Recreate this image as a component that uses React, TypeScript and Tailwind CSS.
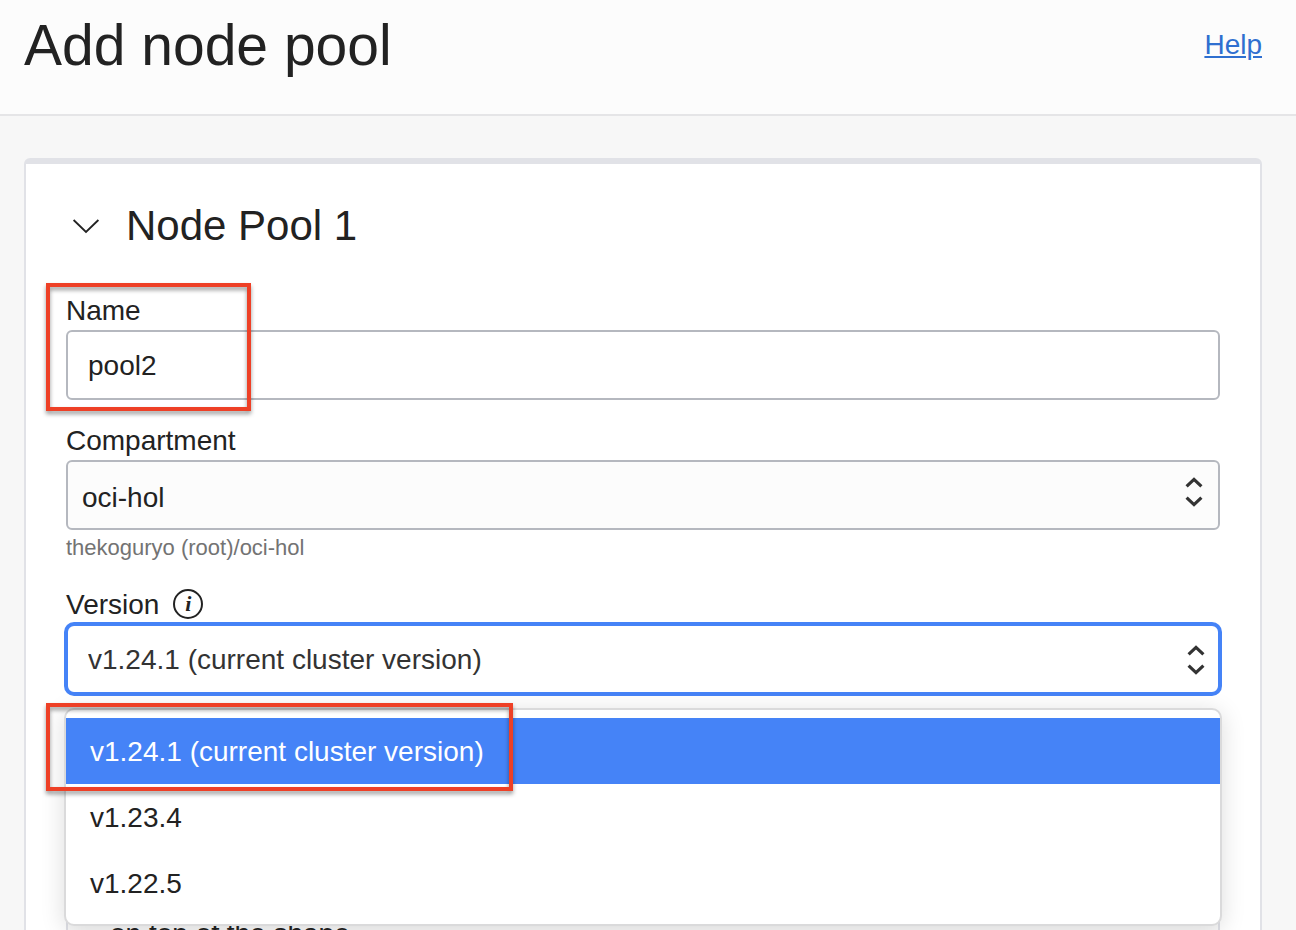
import { useState } from "react";

const versions = [
  { value: "v1.24.1", label: "v1.24.1 (current cluster version)" },
  { value: "v1.23.4", label: "v1.23.4" },
  { value: "v1.22.5", label: "v1.22.5" },
];

const labelClass = "pt-0.5 text-[28px] leading-[38px]";
const fieldClass =
  "h-[70px] w-full rounded-md border-2 border-[#b5b8bf] text-[28px] outline-none";

function ChevronDown() {
  return (
    <svg width="28" height="16" viewBox="0 0 28 16" fill="none" aria-hidden="true">
      <path d="M1.6 2 14 14 26.4 2" stroke="#222" strokeWidth="1.8" />
    </svg>
  );
}

function UpDown() {
  return (
    <svg width="18" height="30" viewBox="0 0 18 30" fill="none" aria-hidden="true">
      <path
        d="M1.6 9.4 9 2.4l7.4 7M1.6 20.6 9 27.6l7.4-7"
        stroke="#333"
        strokeWidth="3.2"
      />
    </svg>
  );
}

function Highlight({ className }: { className: string }) {
  return (
    <div
      aria-hidden="true"
      className={`pointer-events-none absolute z-20 border-4 border-[#ee4026] drop-shadow-[0_3px_2px_rgba(0,0,0,0.4)] ${className}`}
    />
  );
}

export default function App() {
  const [name, setName] = useState("pool2");
  const [selected, setSelected] = useState(versions[0]);

  return (
    <div className="flex h-screen flex-col overflow-hidden bg-[#f7f7f7] font-['Liberation_Sans',Arial,sans-serif] text-[#222]">
      <header className="flex items-center justify-between border-b-2 border-[#e5e5e7] bg-[#fcfcfc] pt-[15px] pr-[34px] pb-[39px] pl-6">
        <h1 className="text-[57px] leading-[60px]">Add node pool</h1>
        <a
          href="#help"
          className="text-[28px] leading-10 text-[#2f6fd0] underline decoration-2 underline-offset-2"
        >
          Help
        </a>
      </header>

      <main className="flex min-h-0 flex-1 flex-col pt-[42px] pr-[34px] pl-6">
        <section className="flex-1 rounded-t-md border-x-2 border-t-[6px] border-[#e1e2e7] bg-white px-10 pt-10">
          <div className="mb-[42px] flex items-center gap-[26px] pl-1.5">
            <button type="button" aria-label="Collapse Node Pool 1">
              <ChevronDown />
            </button>
            <h2 className="text-[42px] leading-11">Node Pool 1</h2>
          </div>

          <form className="flex flex-col gap-5">
            <div className="relative flex flex-col">
              <label htmlFor="name" className={labelClass}>
                Name
              </label>
              <input
                id="name"
                value={name}
                onChange={(e) => setName(e.target.value)}
                className={`${fieldClass} bg-white px-5 pt-0.5`}
              />
              <Highlight className="-top-[7px] -left-5 h-32 w-[205px]" />
            </div>

            <div className="flex flex-col">
              <label htmlFor="compartment" className={labelClass}>
                Compartment
              </label>
              <div className="relative">
                <select
                  id="compartment"
                  className={`${fieldClass} block appearance-none bg-[#fcfcfc] px-[14px] pt-1.5`}
                >
                  <option>oci-hol</option>
                </select>
                <span className="pointer-events-none absolute top-[17px] right-[17px]">
                  <UpDown />
                </span>
              </div>
              <p className="pt-0.5 text-[22px] leading-8 text-[#737373]">
                thekoguryo (root)/oci-hol
              </p>
            </div>

            <div className="flex flex-col">
              <div className="flex items-center gap-[14px]">
                <label htmlFor="version" className={labelClass}>
                  Version
                </label>
                <button
                  type="button"
                  aria-label="About version"
                  className="flex size-[30px] items-center justify-center rounded-full border-2 border-[#222] font-['Liberation_Serif',serif] text-[22px] leading-none font-bold italic"
                >
                  i
                </button>
              </div>
              <div className="relative">
                <input
                  id="version"
                  role="combobox"
                  aria-expanded="true"
                  aria-controls="version-list"
                  readOnly
                  value={selected.label}
                  className="block h-[70px] w-full rounded-lg border-2 border-[#4583f7] bg-white px-5 pt-0.5 text-[28px] text-[#333] ring-2 ring-[#4583f7] outline-none"
                />
                <span className="pointer-events-none absolute top-[21px] right-[15px]">
                  <UpDown />
                </span>

                <div className="absolute top-[84px] -right-0.5 -left-0.5 z-10 rounded-[10px] border-2 border-[#dadadb] bg-white py-2 shadow-[0_4px_24px_rgba(0,0,0,0.14)]">
                  <ul id="version-list" role="listbox" aria-label="Version">
                    {versions.map((v) => (
                      <li
                        key={v.value}
                        role="option"
                        aria-selected={v.value === selected.value}
                        onClick={() => setSelected(v)}
                        className={`cursor-pointer px-6 pt-0.5 text-[28px] leading-16 ${
                          v.value === selected.value ? "bg-[#4583f7] text-white" : ""
                        }`}
                      >
                        {v.label}
                      </li>
                    ))}
                  </ul>
                  <Highlight className="-top-[7px] -left-5 h-[88px] w-[467px]" />
                </div>
              </div>
            </div>

            <div className="rounded-md border-2 border-[#dfe0e6] bg-[#fafafa] px-[42px] pt-[200px]">
              <p className="text-[28px] leading-9">on top of the shape</p>
            </div>
          </form>
        </section>
      </main>
    </div>
  );
}
